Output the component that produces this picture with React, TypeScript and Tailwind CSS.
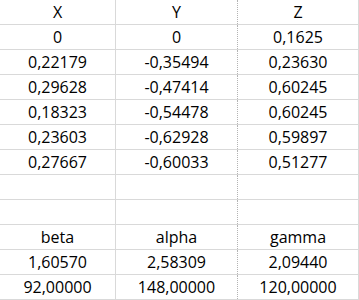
import React from 'react';

const rows: string[][] = [
  ['X', 'Y', 'Z'],
  ['0', '0', '0,1625'],
  ['0,22179', '-0,35494', '0,23630'],
  ['0,29628', '-0,47414', '0,60245'],
  ['0,18323', '-0,54478', '0,60245'],
  ['0,23603', '-0,62928', '0,59897'],
  ['0,27667', '-0,60033', '0,51277'],
  ['', '', ''],
  ['', '', ''],
  ['beta', 'alpha', 'gamma'],
  ['1,60570', '2,58309', '2,09440'],
  ['92,00000', '148,00000', '120,00000'],
];

const App: React.FC = () => {
  return (
    <div
      className="w-[359px] h-[300px] overflow-hidden bg-white text-black text-[16px]"
      style={{ fontFamily: '"Open Sans", Lato, sans-serif' }}
    >
      {rows.map((row, i) => (
        <div key={i} className="grid grid-cols-[116px_122px_121px] h-[25px] border-b border-[#d9d9d9]">
          <div className="flex items-center justify-center border-r border-[#d9d9d9]">{row[0]}</div>
          <div className="flex items-center justify-center border-r border-dotted border-[#b3b3b3]">{row[1]}</div>
          <div className="flex items-center justify-center border-r border-[#d9d9d9]">{row[2]}</div>
        </div>
      ))}
    </div>
  );
};

export default App;
